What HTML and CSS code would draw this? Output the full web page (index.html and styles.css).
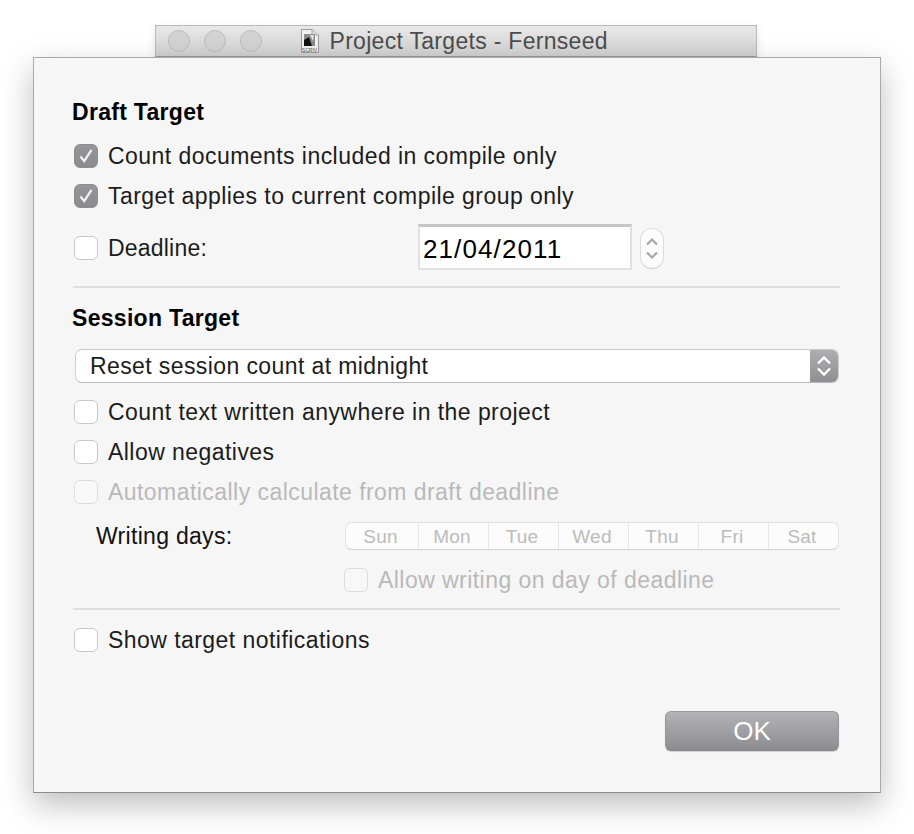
FILE: index.html
```html
<!DOCTYPE html>
<html lang="en">
<head>
<meta charset="utf-8">
<title>Project Targets - Fernseed</title>
<link rel="stylesheet" href="styles.css">
</head>
<body>
<div class="stage">
  <div class="sheet-title">
    <div class="lights"><span class="light"></span><span class="light"></span><span class="light"></span></div>
    <svg class="doc" width="19" height="24" viewBox="0 0 19 24"><path d="M1.500.5H12L18.500 6V23.500H1.500Z" fill="#f1f1f1" stroke="#9a9a9a"/><path d="M12 .5V6H18.500" fill="#ddd" stroke="#a5a5a5"/><path d="M4 5H15V17H4Z" fill="#8c8c8c"/><path d="M4 11L9 8L12 17H4Z" fill="#111"/><path d="M10 6L14 6L13 12Z" fill="#e6e6e6"/><text class="doc-label" x="9.500" y="22.500" text-anchor="middle">SCRIV</text></svg>
    <span class="title-text">Project Targets - Fernseed</span>
  </div>
  <main class="window">
    <h2 class="heading">Draft Target</h2>
    <label class="row row-first"><span class="check on"><svg width="16" height="16" viewBox="0 0 16 16"><path d="M2.500 8.500L6.200 13.200L13.500 1.800" fill="none" stroke="#f4f4f4" stroke-width="2.200"/></svg></span>Count documents included in compile only</label>
    <label class="row"><span class="check on"><svg width="16" height="16" viewBox="0 0 16 16"><path d="M2.500 8.500L6.200 13.200L13.500 1.800" fill="none" stroke="#f4f4f4" stroke-width="2.200"/></svg></span>Target applies to current compile group only</label>
    <div class="deadline">
      <label class="row deadline-label"><span class="check"></span>Deadline:</label>
      <div class="date-field">21/04/2011</div>
      <div class="stepper">
        <svg width="14" height="10" viewBox="0 0 14 10"><path d="M2 7.500L7 2.500L12 7.500" fill="none" stroke="#a8a8a8" stroke-width="2.200"/></svg>
        <svg width="14" height="10" viewBox="0 0 14 10"><path d="M2 2.500L7 7.500L12 2.500" fill="none" stroke="#a8a8a8" stroke-width="2.200"/></svg>
      </div>
    </div>
    <hr class="rule rule-a">
    <h2 class="heading heading-session">Session Target</h2>
    <div class="select">
      <span class="select-text">Reset session count at midnight</span>
      <span class="select-arrows">
        <svg width="16" height="24" viewBox="0 0 16 24"><path d="M2 9.500L8 3.500L14 9.500M2 14.500L8 20.500L14 14.500" fill="none" stroke="#fff" stroke-width="2.300"/></svg>
      </span>
    </div>
    <label class="row row-after-select"><span class="check"></span>Count text written anywhere in the project</label>
    <label class="row"><span class="check"></span>Allow negatives</label>
    <label class="row disabled"><span class="check"></span>Automatically calculate from draft deadline</label>
    <div class="days">
      <span class="days-label">Writing days:</span>
      <div class="segments">
        <span class="seg">Sun</span><span class="seg">Mon</span><span class="seg">Tue</span><span class="seg">Wed</span><span class="seg">Thu</span><span class="seg">Fri</span><span class="seg">Sat</span>
      </div>
    </div>
    <label class="row disabled row-allow"><span class="check"></span>Allow writing on day of deadline</label>
    <hr class="rule rule-b">
    <label class="row row-notify"><span class="check"></span>Show target notifications</label>
    <div class="actions"><button class="ok" type="button">OK</button></div>
  </main>
</div>
</body>
</html>
```

FILE: styles.css
```css
* { box-sizing: border-box; }
html, body { margin: 0; padding: 0; background: #fff; }
body {
  width: 914px;
  height: 834px;
  overflow: hidden;
  font-family: "Liberation Sans", Arial, sans-serif;
  font-size: 23px;
  color: #1c1c1c;
}
.stage {
  display: flex;
  flex-direction: column;
  align-items: center;
  padding-top: 25px;
  width: 914px;
}
.sheet-title {
  width: 602px;
  height: 32px;
  margin-left: -3px;
  display: flex;
  align-items: center;
  padding-left: 12px;
  border: 1px solid #b9b9b9;
  border-bottom: 1px solid #9b9b9b;
  background: linear-gradient(#e9e8e9, #d2d1d2);
  box-shadow: 0 4px 10px rgba(0,0,0,.1);
}
.lights { display: flex; gap: 14px; }
.light {
  width: 22px;
  height: 22px;
  border-radius: 50%;
  background: #d4d3d4;
  border: 1px solid #bdbdbd;
}
.doc { margin-left: 38px; flex: none; }
.doc-label {
  font-family: "Liberation Sans", Arial, sans-serif;
  font-size: 5px;
  fill: #555;
}
.title-text {
  margin-left: 11px;
  font-size: 23px;
  letter-spacing: .3px;
  color: #4d4d4d;
}
.window {
  width: 848px;
  height: 736px;
  padding: 40px 41px 0 39px;
  background: #f6f6f6;
  border: 1px solid #a9a9a9;
  border-bottom-color: #8c8c8c;
  box-shadow: 0 12px 30px rgba(0,0,0,.26);
  display: flex;
  flex-direction: column;
}
.heading {
  margin: 0 0 0 -1px;
  height: 28px;
  line-height: 28px;
  font-size: 23px;
  font-weight: 700;
  color: #000;
  letter-spacing: .3px;
}
.row {
  display: flex;
  align-items: center;
  height: 40px;
  letter-spacing: .45px;
  white-space: nowrap;
}
.row-first { margin-top: 10px; }
.check {
  flex: none;
  width: 24px;
  height: 24px;
  margin: 0 10px 0 1px;
  border-radius: 6px;
  background: #fff;
  border: 1px solid #c9c9c9;
  display: flex;
  align-items: center;
  justify-content: center;
}
.check.on { background: linear-gradient(#97969b, #8b8a8f); border-color: #8c8b90; }
.deadline {
  display: flex;
  align-items: center;
  height: 46px;
  margin-top: 9px;
}
.deadline-label { width: 345px; letter-spacing: .2px; }
.date-field {
  width: 214px;
  height: 46px;
  margin-bottom: 2px;
  padding-left: 3px;
  line-height: 44px;
  font-size: 26px;
  letter-spacing: 1.1px;
  color: #000;
  background: #fff;
  border: 2px solid #e1e1e1;
  border-top: 3px solid #c6c6c6;
}
.stepper {
  width: 24px;
  height: 41px;
  margin-left: 8px;
  border-radius: 12px;
  background: #fcfcfc;
  border: 1px solid #dcdcdc;
  border-bottom-color: #cfcfcf;
  display: flex;
  flex-direction: column;
  align-items: center;
  justify-content: center;
  gap: 3px;
}
.rule {
  width: 767px;
  height: 2px;
  margin: 0;
  border: 0;
  background: #dfdfdf;
  flex: none;
}
.rule-a { margin-top: 15px; }
.heading-session { margin-top: 16px; }
.select {
  display: flex;
  width: 764px;
  height: 34px;
  margin: 17px 0 0 2px;
  background: #fff;
  border: 1px solid #d0d0d0;
  border-top-color: #c8c8c8;
  border-bottom-color: #b9b9b9;
  border-radius: 7px;
  overflow: hidden;
  flex: none;
}
.select-text {
  flex: 1;
  padding-left: 14px;
  line-height: 33px;
  letter-spacing: .4px;
}
.select-arrows {
  width: 28px;
  background: linear-gradient(#aeadb2, #8f8e93);
  display: flex;
  align-items: center;
  justify-content: center;
}
.row-after-select { margin-top: 9px; }
.disabled { color: #b9b9b9; }
.disabled .check { background: #f8f8f8; border-color: #dcdcdc; }
.days {
  display: flex;
  align-items: center;
  height: 28px;
  margin-top: 10px;
}
.days-label {
  width: 272px;
  padding-left: 23px;
  letter-spacing: .3px;
  color: #111;
}
.segments {
  display: flex;
  width: 494px;
  height: 28px;
  background: #fcfcfc;
  border: 1px solid #e2e2e2;
  border-bottom-color: #d3d3d3;
  border-radius: 7px;
}
.seg {
  flex: none;
  width: 70px;
  padding-right: 3px;
  text-align: center;
  font-size: 19px;
  line-height: 28px;
  letter-spacing: .2px;
  color: #bdbbbb;
  border-left: 1px solid #e6e6e6;
}
.seg:first-child { width: 72px; border-left: 0; }
.row-allow { margin: 10px 0 0 270px; }
.rule-b { margin-top: 8px; }
.row-notify { margin-top: 10px; }
.actions {
  display: flex;
  justify-content: flex-end;
  width: 766px;
  margin-top: 51px;
}
.ok {
  width: 174px;
  height: 40px;
  padding: 0;
  border: 1px solid #96959a;
  border-bottom-color: #85848a;
  border-radius: 6px;
  background: linear-gradient(#b3b2b7, #8d8c91);
  color: #fff;
  font-family: "Liberation Sans", Arial, sans-serif;
  font-size: 26px;
  box-shadow: 0 1px 1px rgba(0,0,0,.15);
}
```
